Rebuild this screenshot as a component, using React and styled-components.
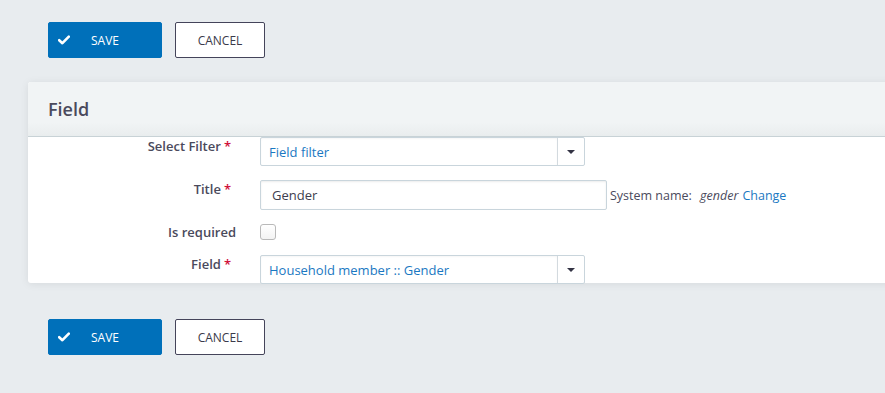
import React from 'react';
import styled, { createGlobalStyle } from 'styled-components';

const GlobalStyle = createGlobalStyle`
  html, body {
    margin: 0;
    background: #e8ecef;
    font-family: "Open Sans", "Liberation Sans", sans-serif;
    overflow: hidden;
  }
`;

const Page = styled.div`
  padding-top: 22px;
  min-height: 393px;
  box-sizing: border-box;
`;

const ButtonBar = styled.div`
  display: flex;
  gap: 13px;
  padding-left: 48px;
  margin-top: ${({ $mt }) => $mt || 0}px;
  margin-bottom: ${({ $mb }) => $mb || 0}px;
`;

const Button = styled.button`
  display: flex;
  align-items: center;
  height: 36px;
  box-sizing: border-box;
  border-radius: 2px;
  font-family: inherit;
  font-size: 12px;
  text-transform: uppercase;
  cursor: pointer;
  padding: 0;
  ${({ $primary }) =>
    $primary
      ? `
    width: 114px;
    background: #0070ba;
    border: 1px solid #0070ba;
    color: #fff;
    padding-left: 9px;
  `
      : `
    width: 90px;
    background: #fff;
    border: 1px solid #44445a;
    color: #3a3a4a;
    justify-content: center;
  `}
`;

const ButtonLabel = styled.span`
  margin-left: 21px;
`;

const Panel = styled.div`
  margin-left: 28px;
  margin-right: -20px;
  background: #fff;
  border-radius: 3px;
  box-shadow: 0 1px 8px rgba(0, 0, 0, 0.08);
`;

const PanelHeader = styled.div`
  height: 54px;
  display: flex;
  align-items: center;
  padding-left: 20px;
  background: linear-gradient(#f1f4f5 75%, #e9edee);
  border-bottom: 1px solid #c8d2d6;
  border-radius: 3px 3px 0 0;
  font-size: 18px;
  font-weight: 600;
  color: #4a4a5c;
`;

const PanelBody = styled.div`
  height: 146px;
`;

const Row = styled.div`
  display: grid;
  grid-template-columns: 208px auto;
  column-gap: 24px;
  align-items: ${({ $center }) => ($center ? 'center' : 'start')};
  min-height: ${({ $h }) => $h || 29}px;
  margin-bottom: ${({ $mb }) => $mb || 0}px;
`;

const Label = styled.label`
  text-align: right;
  font-size: 13px;
  font-weight: 600;
  line-height: 18px;
  color: #4a4a5c;
  padding-right: ${({ $required }) => ($required ? 5 : 0)}px;
`;

const Req = styled.span`
  color: #d0103a;
  margin-left: 3px;
`;

const Control = styled.div`
  display: flex;
  align-items: center;
`;

const Select = styled.div`
  width: 325px;
  height: 29px;
  box-sizing: border-box;
  display: flex;
  border: 1px solid #c9d5dc;
  border-radius: 2px;
  background: #fff;
  font-size: 13px;
  color: #1a78c2;
`;

const SelectValue = styled.div`
  flex: 1;
  display: flex;
  align-items: center;
  padding-left: 8px;
  border-right: 1px solid #d3dadf;
  box-shadow: inset 0 1px 2px rgba(0, 0, 0, 0.04);
`;

const Caret = styled.div`
  width: 26px;
  display: flex;
  align-items: center;
  justify-content: center;
  &::after {
    content: '';
    border-left: 4px solid transparent;
    border-right: 4px solid transparent;
    border-top: 4px solid #333344;
  }
`;

const Input = styled.div`
  width: 347px;
  height: 30px;
  box-sizing: border-box;
  border: 1px solid #c9d5dc;
  border-radius: 2px;
  box-shadow: inset 0 1px 2px rgba(0, 0, 0, 0.08);
  display: flex;
  align-items: center;
  padding-left: 11px;
  font-size: 13px;
  color: #3d3d4e;
`;

const Hint = styled.span`
  margin-left: 3px;
  font-size: 12.5px;
  color: #4a4a5c;
  em {
    margin-left: 5px;
    margin-right: 4px;
  }
  a {
    color: #1a78c2;
    text-decoration: none;
  }
`;

const Checkbox = styled.span`
  display: block;
  width: 14px;
  height: 14px;
  border: 1px solid #b9b9b9;
  border-radius: 3px;
  background: linear-gradient(#fff, #f3f3f3);
`;

function Check() {
  return (
    <svg width="12" height="10" viewBox="0 0 12 10">
      <path d="M1.2 5.2 L4.4 8.2 L10.8 1.6" fill="none" stroke="#fff" strokeWidth="2.6" strokeLinecap="round" strokeLinejoin="round" />
    </svg>
  );
}

function Actions({ mt, mb }) {
  return (
    <ButtonBar $mt={mt} $mb={mb}>
      <Button $primary>
        <Check />
        <ButtonLabel>Save</ButtonLabel>
      </Button>
      <Button>Cancel</Button>
    </ButtonBar>
  );
}

export default function App() {
  return (
    <Page>
      <GlobalStyle />
      <Actions mb={24} />
      <Panel>
        <PanelHeader>Field</PanelHeader>
        <PanelBody>
          <Row $mb={14}>
            <Label $required>Select Filter<Req>*</Req></Label>
            <Control>
              <Select>
                <SelectValue>Field filter</SelectValue>
                <Caret />
              </Select>
            </Control>
          </Row>
          <Row $mb={7}>
            <Label $required>Title<Req>*</Req></Label>
            <Control>
              <Input>Gender</Input>
              <Hint>
                System name: <em>gender</em><a href="#">Change</a>
              </Hint>
            </Control>
          </Row>
          <Row $center $h={30} $mb={8}>
            <Label>Is required</Label>
            <Control>
              <Checkbox />
            </Control>
          </Row>
          <Row>
            <Label $required>Field<Req>*</Req></Label>
            <Control>
              <Select>
                <SelectValue>Household member :: Gender</SelectValue>
                <Caret />
              </Select>
            </Control>
          </Row>
        </PanelBody>
      </Panel>
      <Actions mt={36} />
    </Page>
  );
}
